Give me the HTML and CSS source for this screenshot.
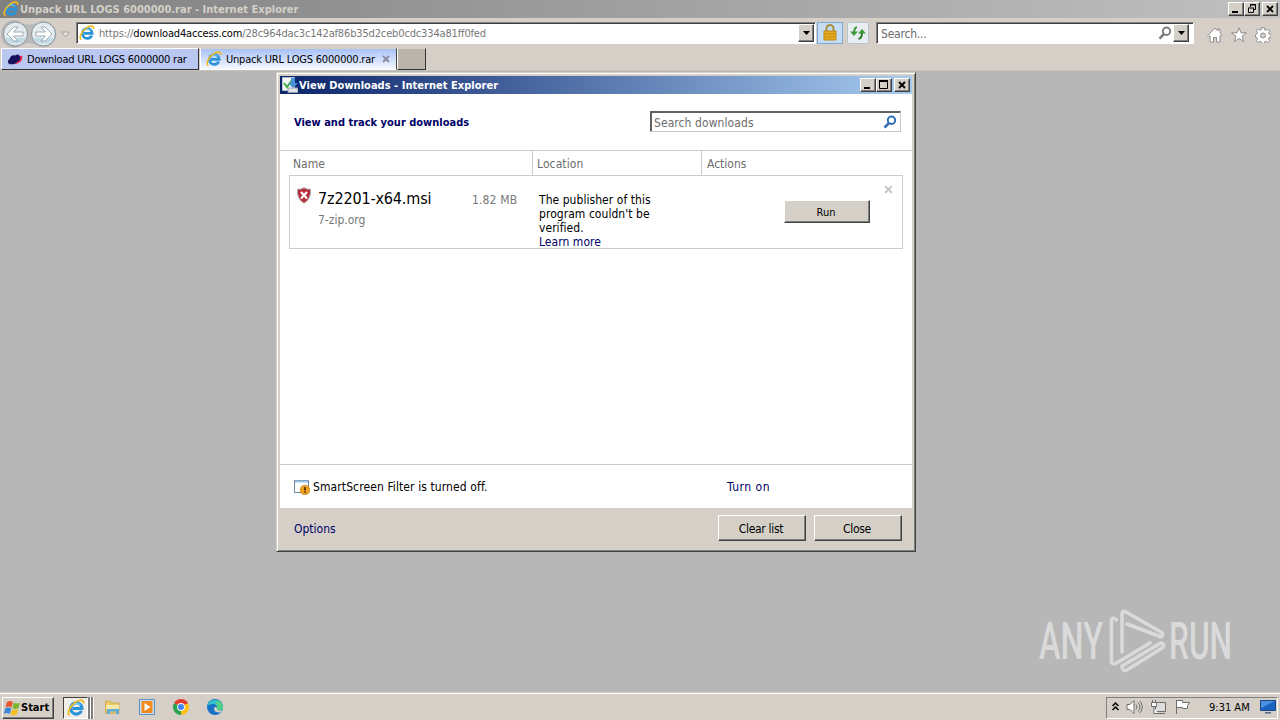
FILE: index.html
```html
<!DOCTYPE html>
<html lang="en">
  <head>
    <meta charset="UTF-8" />
    <meta name="viewport" content="width=device-width, initial-scale=1.0" />
    <title>Unpack URL LOGS 6000000.rar - Internet Explorer</title>
    <link rel="stylesheet" href="styles.css" />
  </head>
  <body>
    <!-- shared icons -->
    <svg class="defs" width="0" height="0">
      <symbol id="ie" viewBox="0 0 16 16">
        <path d="M12.8 10.6A5 5 0 1 1 13.3 8.4H5" fill="none" stroke="#2b93d8" stroke-width="2.7" />
        <path d="M4.5 6.4A4.6 4.6 0 0 1 12 5.4" fill="none" stroke="#7fcdf5" stroke-width="1" />
        <path d="M2.4 14.6C-.6 13.4 2.2 6.8 7 3.2 10.8.3 15.3.2 14.6 4" fill="none" stroke="#f0bb21" stroke-width="1.6" />
      </symbol>
      <symbol id="close" viewBox="0 0 8 8">
        <path d="M1 1l6 6M7 1L1 7" fill="none" stroke="currentColor" stroke-width="1.8" />
      </symbol>
      <symbol id="arrow" viewBox="0 0 7 4">
        <path d="M0 0h7L3.5 4z" />
      </symbol>
      <symbol id="lens" viewBox="0 0 14 14">
        <circle cx="8.5" cy="5.2" r="3.7" fill="none" stroke="currentColor" stroke-width="2" />
        <path d="M6 8L1.5 12.6" stroke="currentColor" stroke-width="2.6" />
      </symbol>
    </svg>

    <header class="titlebar">
      <svg class="icon16"><use href="#ie" /></svg>
      <h1>Unpack URL LOGS 6000000.rar - Internet Explorer</h1>
      <div class="controls">
        <span class="ctl"><svg width="10" height="10"><path d="M1 8h6" stroke="#000" stroke-width="2" /></svg></span>
        <span class="ctl"><svg width="10" height="10"><path d="M3.5 3V.5h5v5H7M3 1h6M1.500 4v4.500h5V4M1 4h6" fill="none" stroke="#000" /></svg></span>
        <span class="ctl gap"><svg width="8" height="8"><use href="#close" /></svg></span>
      </div>
    </header>

    <div class="toolbar">
      <svg class="navigate" width="74" height="29" viewBox="0 0 74 29">
        <path d="M1 15A13 13 0 0 1 22 4Q29 7 37 4A13 13 0 1 1 36 26Q29 22 22 26A13 13 0 0 1 1 15z" fill="#b9b9b9" />
        <circle cx="15.500" cy="15" r="12" fill="#e4ebef" stroke="#8b949b" />
        <circle cx="43.500" cy="15" r="12" fill="#e4ebef" stroke="#8b949b" />
        <path d="M5 19a11 8 0 0 0 21 0zM33 19a11 8 0 0 0 21 0z" fill="#bfdbe6" />
        <path d="M7 15l7-7h4l-4.500 5H23v4h-9.500l4.500 5h-4zM52 15l-7-7h-4l4.500 5H36v4h9.500L41 22h4z" fill="#fff" stroke="#8e9ba5" stroke-width=".8" />
        <path d="M61.500 13h8l-4 5z" fill="#e4e1dc" stroke="#aaa69f" />
      </svg>
      <div class="address">
        <svg class="icon16"><use href="#ie" /></svg>
        <p>https://<b>download4access.com</b>/28c964dac3c142af86b35d2ceb0cdc334a81ff0fed</p>
        <span class="drop"><svg width="7" height="4"><use href="#arrow" /></svg></span>
      </div>
      <span class="tool lock">
        <svg width="14" height="18" viewBox="0 0 14 18">
          <path d="M3.500 8V4.500a3.500 3.500 0 0 1 7 0V8" fill="none" stroke="#a98d43" stroke-width="2" />
          <path d="M1 7h12v9H1z" fill="#e9ad1e" stroke="#b98316" />
          <path d="M2 10h10M2 13h10" stroke="#bd8617" />
        </svg>
      </span>
      <span class="tool refresh">
        <svg width="16" height="16" viewBox="0 0 16 16">
          <path d="M7 2Q4 3 4 8" fill="none" stroke="#3f9a3e" stroke-width="2" />
          <path d="M0 6.500h8L4 11zM8 8.500h8L12 4z" fill="#3f9a3e" />
          <path d="M12 8Q12 13 8.500 14" fill="none" stroke="#2a7b2b" stroke-width="2" />
        </svg>
      </span>
      <div class="search">
        <p>Search...</p>
        <svg class="lens" width="14" height="14"><use href="#lens" /></svg>
        <span class="drop"><svg width="7" height="4"><use href="#arrow" /></svg></span>
      </div>
      <div class="commands">
        <svg width="16" height="16" viewBox="0 0 16 16"><path d="M.8 8.500L8 1l3 3V2h2v4l2.200 2.500-1 1L13 8.500V15H9.500v-4.500h-3V15H3V8.500l-1.200 1z" /></svg>
        <svg width="16" height="16" viewBox="0 0 16 16"><path d="M8 .8l2 5h5.400L11 9.200l1.700 5.500L8 11.400l-4.700 3.300L5 9.200.6 5.800H6z" /></svg>
        <svg width="16" height="16" viewBox="0 0 16 16">
          <path d="M6.700.7h2.600l.4 2 1.500.6 1.700-1.200 1.800 1.800-1.100 1.700.6 1.500 1.900.4v2.600l-1.900.4-.6 1.500 1.100 1.700-1.800 1.800-1.700-1.200-1.500.6-.4 1.400H6.700l-.4-1.400-1.500-.6-1.700 1.200-1.800-1.800 1.100-1.700-.6-1.500L.5 10V7.500L1.800 7l.6-1.500-1.100-1.700L3.100 2l1.700 1.200 1.500-.6z" />
          <circle cx="8" cy="8.500" r="2.500" class="hole" />
        </svg>
      </div>
    </div>

    <div class="tabs">
      <div class="tab">
        <svg width="16" height="16" viewBox="0 0 16 16">
          <path d="M8 13Q15 12.500 15.500 5.500 14 4 11 6z" fill="#e8274d" />
          <path d="M2 13Q-.5 10 2.500 8 4 3 8 4.500 12 2 13 6 14 9 11 10.500 8 14 2 13z" fill="#17135f" />
        </svg>
        <span>Download URL LOGS 6000000 rar</span>
      </div>
      <div class="tab active">
        <svg class="icon16"><use href="#ie" /></svg>
        <span>Unpack URL LOGS 6000000.rar</span>
        <svg class="x" width="8" height="8"><use href="#close" /></svg>
      </div>
      <div class="newtab"></div>
    </div>

    <main>
      <svg class="watermark" width="230" height="80" viewBox="0 0 230 80">
        <text x="19" y="59" textLength="64" lengthAdjust="spacingAndGlyphs">ANY</text>
        <text x="149" y="59" textLength="63" lengthAdjust="spacingAndGlyphs">RUN</text>
        <path d="M96.500 20q-4-4-5 0v42q1 3 5 1L130 43M102 52V15q0-5 4-3l35 20q3 2 1 4-1 2-3 0L107 24M102 67q1 5 5 3l35-22q3-2 1-4-2-2-4 0L102 66" />
      </svg>
    </main>

    <footer class="taskbar">
      <div class="start">
        <svg width="17" height="16" viewBox="0 0 17 16">
          <path d="M3 2q3-2 6 0L7.500 7.500q-3-2-6 0z" fill="#e8572a" />
          <path d="M10 2.500q3 2 6 0L14.500 8q-3 2-6 0z" fill="#79b82d" />
          <path d="M1.200 8.500q3-2 6 0L5.800 14q-3-2-6 0z" fill="#3787d6" />
          <path d="M8.200 9q3 2 6 0l-1.500 5.500q-3 2-6 0z" fill="#f4bd21" />
        </svg>
        <b>Start</b>
      </div>
      <div class="running">
        <svg width="18" height="18"><use href="#ie" /></svg>
      </div>
      <div class="pinned">
        <svg width="18" height="18" viewBox="0 0 18 18">
          <path d="M1.500 3h5l1 2H15v10H1.500z" fill="#e9cb6b" stroke="#cfa94a" />
          <path d="M2 7h13v4H2z" fill="#f9e9a6" />
          <path d="M3 16v-5h12v5h-3v-2.500H6V16z" fill="#62add8" />
        </svg>
        <svg width="18" height="18" viewBox="0 0 18 18">
          <path d="M1.500 1.500h15v15h-15z" fill="#c7dff2" stroke="#5b90c0" />
          <path d="M3.500 3h11v12h-11z" fill="#f28a1c" />
          <path d="M6.500 5v8l6-4z" fill="#fff" />
        </svg>
        <svg width="18" height="18" viewBox="0 0 18 18">
          <path d="M9 9L2.070 5A8 8 0 0 1 15.930 5z" fill="#e33b2e" />
          <path d="M9 9L15.930 5A8 8 0 0 1 9 17z" fill="#fbc116" />
          <path d="M9 9V17A8 8 0 0 1 2.070 5z" fill="#2da14c" />
          <path d="M9 5h6.900" stroke="#e33b2e" />
          <circle cx="9" cy="9" r="3.900" fill="#fff" />
          <circle cx="9" cy="9" r="3" fill="#4384f3" />
        </svg>
        <svg width="18" height="18" viewBox="0 0 18 18">
          <circle cx="9" cy="9" r="8" fill="#1672c4" />
          <path d="M1.200 8A8 8 0 0 1 17 9q0 4-5 3.500-2-.5-1-2.500 0-4-4-4-4 0-5.800 2z" fill="#35c3c9" />
          <path d="M11 2Q17 4 17 9q0 4-5 3.500-2-.5-1-2.500 1-3-1-5z" fill="#55cf83" />
          <path d="M11 10q-1 3 5 2.500l-1.500 2Q8 15 8 10.500q1-3 3-.5z" fill="#d4d0c8" />
        </svg>
      </div>
      <div class="tray">
        <svg width="7" height="9" viewBox="0 0 7 9"><path d="M.5 4l3-3 3 3M.5 8l3-3 3 3" fill="none" stroke="#000" stroke-width="1.500" /></svg>
        <svg width="17" height="16" viewBox="0 0 17 16" class="line">
          <path d="M1 5.500h3l4-4v13l-4-4H1z" fill="#fff" />
          <path d="M10 5.500q2 2.500 0 5M12 3.500q4 4.500 0 9M14 2q4.500 6 0 12" fill="none" />
        </svg>
        <svg width="17" height="16" viewBox="0 0 17 16" class="line">
          <path d="M5.500 3.500h10v9h-10zM7 14.500h8" fill="#ddd" />
          <path d="M1.500 3.500h5v4h-5zM2.500 1v2M5.500 1v2M4 8v6.500h4" fill="#fff" />
        </svg>
        <svg width="17" height="16" viewBox="0 0 17 16" class="line">
          <path d="M2.500 1v14M2.500 1.500h6v2h7l-2 3 0 3h-5v-1h-6z" fill="#fff" />
        </svg>
        <time>9:31 AM</time>
        <svg width="16" height="14" viewBox="0 0 16 14">
          <path d="M.5.5h15v10H.5z" fill="#1b63c0" stroke="#174884" />
          <path d="M1 1h14L1 8z" fill="#4b93e2" />
          <path d="M5 12h6v1.500H5z" fill="#526a82" />
        </svg>
      </div>
    </footer>

    <div class="dialog">
      <div class="dialog-title">
        <svg width="16" height="16" viewBox="0 0 16 16">
          <path d="M.5.5h12v13H.5z" fill="#f6f8fa" stroke="#b9c2cc" />
          <path d="M2 6l3 4 5-7" fill="none" stroke="#46ae3c" stroke-width="2" />
          <path d="M9 1h4v5h3l-5 5-5-5h3z" fill="#4592d8" />
          <path d="M6 11h10v4.500H6z" fill="#e1e5e8" stroke="#929ca5" />
        </svg>
        <h2>View Downloads - Internet Explorer</h2>
        <div class="controls">
          <span class="ctl"><svg width="10" height="10"><path d="M1 8h6" stroke="#000" stroke-width="2" /></svg></span>
          <span class="ctl"><svg width="10" height="10"><path d="M.5 1v7.500h8V1" fill="none" stroke="#000" /><path d="M0 1h9" stroke="#000" stroke-width="2" /></svg></span>
          <span class="ctl gap"><svg width="8" height="8"><use href="#close" /></svg></span>
        </div>
      </div>

      <div class="dialog-head">
        <h3>View and track your downloads</h3>
        <div class="filter">
          <p>Search downloads</p>
          <svg width="14" height="14"><use href="#lens" /></svg>
        </div>
      </div>

      <div class="columns">
        <span>Name</span>
        <span>Location</span>
        <span>Actions</span>
      </div>

      <article class="download">
        <svg class="shield" width="16" height="17" viewBox="0 0 16 17">
          <path d="M8 .7q3 2 6.500 1.500.8 9.800-6.500 14Q.7 12 1.500 2.200 5 2.700 8 .7z" fill="#b92c36" stroke="#a9a9ad" />
          <path d="M5 5l6 6.500M11 5l-6 6.500" stroke="#fff" stroke-width="2.200" />
        </svg>
        <div class="file">
          <p class="name">7z2201-x64.msi</p>
          <p class="source">7-zip.org</p>
        </div>
        <p class="size">1.82 MB</p>
        <p class="status">
          The publisher of this<br />program couldn't be<br />verified.<br />
          <a>Learn more</a>
        </p>
        <button class="run">Run</button>
        <svg class="remove" width="9" height="9"><use href="#close" /></svg>
      </article>

      <div class="smartscreen">
        <svg width="16" height="16" viewBox="0 0 16 16">
          <path d="M.5 1.500h14v12H.5z" fill="#fff" stroke="#6f8398" />
          <path d="M1 2.500h13" stroke="#9cc4e8" stroke-width="2" />
          <circle cx="11" cy="11" r="4.800" fill="#efa021" stroke="#c27a15" stroke-width=".6" />
          <path d="M11 8v3.500M11 12.500V14" stroke="#4a2b00" stroke-width="1.600" />
        </svg>
        <p>SmartScreen Filter is turned off.</p>
        <a>Turn on</a>
      </div>

      <div class="dialog-foot">
        <a>Options</a>
        <button>Clear list</button>
        <button>Close</button>
      </div>
    </div>
  </body>
</html>
```

FILE: styles.css
```css
* {
  box-sizing: border-box;
  margin: 0;
}

body {
  width: 1280px;
  height: 720px;
  overflow: hidden;
  display: flex;
  flex-direction: column;
  background: #b7b7b7;
  color: #000;
  font-family: "DejaVu Sans Condensed", "DejaVu Sans", sans-serif;
  font-size: 11px;
  line-height: 14px;
  white-space: nowrap;
}

svg {
  display: block;
  flex: none;
}

.defs {
  position: absolute;
}

.icon16 {
  width: 16px;
  height: 16px;
}

h1,
h2,
h3 {
  font-size: 11px;
  font-weight: bold;
}

a {
  color: #000066;
}

/* browser window */

.titlebar {
  height: 18px;
  display: flex;
  align-items: center;
  gap: 1px;
  padding: 0 2px 0 3px;
  background: linear-gradient(to right, #808080, #c0c0c0);
}

.titlebar h1 {
  padding-top: 1px;
  color: #d4d0c8;
}

.controls {
  display: flex;
  margin-left: auto;
}

.ctl {
  width: 16px;
  height: 14px;
  display: flex;
  align-items: center;
  justify-content: center;
  background: #d4d0c8;
  border: 1px solid;
  border-color: #fff #404040 #404040 #fff;
  box-shadow: inset -1px -1px #808080;
  color: #000;
}

.ctl.gap {
  margin-left: 2px;
}

.toolbar {
  height: 30px;
  display: flex;
  align-items: center;
  background: #d5cfc8;
}

.navigate {
  margin-right: 2px;
}

.address,
.search {
  height: 22px;
  display: flex;
  align-items: center;
  background: #fff;
  border: 1px solid;
  border-color: #808080 #fff #fff #808080;
  box-shadow: inset 1px 1px #404040;
}

.address {
  width: 740px;
  padding: 0 1px 0 2px;
  gap: 4px;
  color: #777;
}

.address p {
  padding-top: 2px;
  letter-spacing: -0.15px;
}

.address b {
  font-weight: normal;
  color: #000;
}

.drop {
  width: 16px;
  height: 18px;
  margin-left: auto;
  display: flex;
  align-items: center;
  justify-content: center;
  background: #d4d0c8;
  border: 1px solid;
  border-color: #fff #404040 #404040 #fff;
  box-shadow: inset -1px -1px #808080;
}

.tool {
  height: 22px;
  display: flex;
  align-items: center;
  justify-content: center;
  border: 1px solid #b9c3cc;
}

.lock {
  width: 26px;
  margin-left: 1px;
  background: #c5dcf5;
  border-color: #7da9d9;
}

.refresh {
  width: 22px;
  margin-left: 4px;
  background: #e9eef2;
  border-radius: 2px;
}

.search {
  width: 318px;
  margin-left: 7px;
  padding: 0 4px;
  font-size: 12px;
  color: #6d6d6d;
}

.search p {
  padding-top: 2px;
  letter-spacing: -0.2px;
}

.search .lens {
  margin-left: auto;
  color: #7d7d7d;
}

.search .drop {
  margin-left: 1px;
}

.commands {
  display: flex;
  gap: 8px;
  margin: 3px 0 0 13px;
}

.commands path {
  fill: #fff;
  stroke: #8d8d8d;
}

.commands .hole {
  fill: #d4d0c8;
  stroke: #8d8d8d;
}

.tabs {
  height: 23px;
  display: flex;
  padding: 0 1px 1px;
  background: #d5cfc8;
  border-bottom: 1px solid #c4c1ba;
}

.tab {
  width: 198px;
  height: 22px;
  display: flex;
  align-items: center;
  gap: 4px;
  padding-left: 5px;
  background: #b9c7f1;
  border: 1px solid;
  border-color: #fff #303030 #303030 #fff;
}

.tab span {
  padding-top: 2px;
  letter-spacing: -0.24px;
}

.tab.active {
  margin-left: 1px;
  width: 197px;
  background: linear-gradient(#a8c2f7, #f5f8ff);
  border-color: #d4d0c8 #404040 #fff #fff;
}

.tab.active span {
  letter-spacing: -0.2px;
}

.tab .x {
  margin-left: 3px;
  color: #8789a0;
}

.newtab {
  width: 29px;
  height: 22px;
  background: #bab4ab;
  border: 1px solid;
  border-color: #d4d0c8 #303030 #303030 #fff;
}

main {
  flex: 1;
  display: flex;
  align-items: flex-end;
  justify-content: flex-end;
  padding: 0 30px 12px 0;
}

.watermark text {
  font: 500 51px "Roboto", sans-serif;
  fill: #dadada;
}

.watermark path {
  fill: none;
  stroke: #dadada;
  stroke-width: 3.6;
  stroke-linecap: round;
  stroke-linejoin: round;
}

/* taskbar */

.taskbar {
  height: 28px;
  display: flex;
  align-items: center;
  padding: 2px 2px 0;
  background: #d5cfc8;
  border-top: 1px solid #d4d0c8;
  box-shadow: inset 0 1px #fff;
}

.start {
  width: 52px;
  height: 22px;
  display: flex;
  align-items: center;
  padding-left: 1px;
  border: 1px solid;
  border-color: #fff #404040 #404040 #fff;
  box-shadow: inset -1px -1px #808080;
}

.running {
  width: 25px;
  height: 22px;
  margin-left: 9px;
  display: flex;
  align-items: center;
  justify-content: center;
  background: #f0eeeb;
  border: 1px solid;
  border-color: #404040 #fff #fff #404040;
  box-shadow: 2px 0 #808080, 3px 0 #fff, 5px 0 #808080, 6px 0 #fff;
}

.pinned {
  display: flex;
  gap: 16px;
  margin-left: 16px;
  padding-bottom: 2px;
}

.tray {
  width: 172px;
  height: 22px;
  margin-left: auto;
  display: flex;
  align-items: center;
  padding: 0 0 2px 5px;
  border: 1px solid;
  border-color: #808080 #fff #fff #808080;
}

.tray svg {
  margin-right: 7px;
}

.tray .line path {
  stroke: #6e6e6e;
}

.tray time {
  margin: 0 10px 0 11px;
  padding-top: 2px;
}

/* downloads window */

.dialog {
  position: absolute;
  left: 276px;
  top: 72px;
  width: 640px;
  height: 480px;
  display: flex;
  flex-direction: column;
  padding: 2px;
  background: #fff;
  border: 1px solid;
  border-color: #d4d0c8 #404040 #404040 #d4d0c8;
  box-shadow: inset 1px 1px #fff, inset -1px -1px #808080,
    inset 0 0 0 3px #d4d0c8;
  font-size: 12px;
}

.dialog-title {
  height: 18px;
  display: flex;
  align-items: center;
  gap: 1px;
  margin: 1px 1px 0;
  padding: 0 2px;
  background: linear-gradient(to right, #0a246a, #a6caf0);
  color: #fff;
}

.dialog-title h2 {
  padding-top: 1px;
  letter-spacing: 0.03px;
}

.dialog-head {
  height: 56px;
  display: flex;
  align-items: center;
  justify-content: space-between;
  margin: 0 1px;
  padding: 0 11px 2px 14px;
}

.dialog-head h3 {
  padding-top: 4px;
  color: #000066;
}

.filter {
  width: 251px;
  height: 21px;
  display: flex;
  align-items: center;
  justify-content: space-between;
  padding: 0 3px;
  border: 1px solid;
  border-color: #606060 #c8c8c8 #c8c8c8 #606060;
  box-shadow: inset 1px 1px #606060;
  color: #6d6d6d;
}

.filter p {
  padding-top: 3px;
  letter-spacing: 0.08px;
}

.filter svg {
  margin-top: 2px;
  color: #2f6eb5;
}

.columns {
  height: 25px;
  display: flex;
  margin: 0 1px;
  padding-left: 9px;
  border-top: 1px solid #ccc;
  color: #6d6d6d;
}

.columns span {
  padding: 6px 4px 0;
}

.columns span:nth-child(1) {
  width: 243px;
}

.columns span:nth-child(2) {
  width: 169px;
  border-left: 1px solid #ccc;
  letter-spacing: 0.1px;
}

.columns span:nth-child(3) {
  width: 200px;
  padding-left: 5px;
  border-left: 1px solid #ccc;
}

.download {
  width: 614px;
  height: 74px;
  display: flex;
  align-items: flex-start;
  margin-left: 10px;
  border: 1px solid #ccc;
}

.shield {
  margin: 11px 0 0 6px;
}

.file {
  width: 160px;
  padding: 14px 0 0 6px;
}

.name {
  font-size: 16px;
  line-height: 18px;
  letter-spacing: -0.15px;
}

.source {
  margin-top: 5px;
}

.source,
.size {
  color: #777;
}

.size {
  width: 67px;
  padding-top: 17px;
  letter-spacing: 0.15px;
}

.status {
  width: 245px;
  padding-top: 17px;
  letter-spacing: 0.05px;
}

button {
  height: 26px;
  width: 88px;
  padding: 2px 2px 0 0;
  font: inherit;
  letter-spacing: -0.3px;
  background: #d4d0c8;
  border: 1px solid;
  border-color: #fff #404040 #404040 #fff;
  box-shadow: inset -1px -1px #808080;
}

.run {
  width: 86px;
  height: 23px;
  margin-top: 24px;
  font-size: 11px;
  letter-spacing: 0;
}

.remove {
  margin: 9px 0 0 14px;
  color: #c4c4c4;
}

.smartscreen {
  height: 44px;
  display: flex;
  align-items: center;
  margin: auto 1px 0;
  padding-left: 14px;
  border-top: 1px solid #ccc;
}

.smartscreen p {
  width: 414px;
  margin-left: 3px;
  letter-spacing: 0.1px;
}

.smartscreen a {
  letter-spacing: 0.5px;
}

.dialog-foot {
  height: 40px;
  display: flex;
  align-items: center;
  gap: 8px;
  margin: 0 1px 1px;
  padding: 0 10px 0 14px;
  background: #d5cfc8;
}

.dialog-foot a {
  margin-right: auto;
  padding-top: 2px;
}
```
